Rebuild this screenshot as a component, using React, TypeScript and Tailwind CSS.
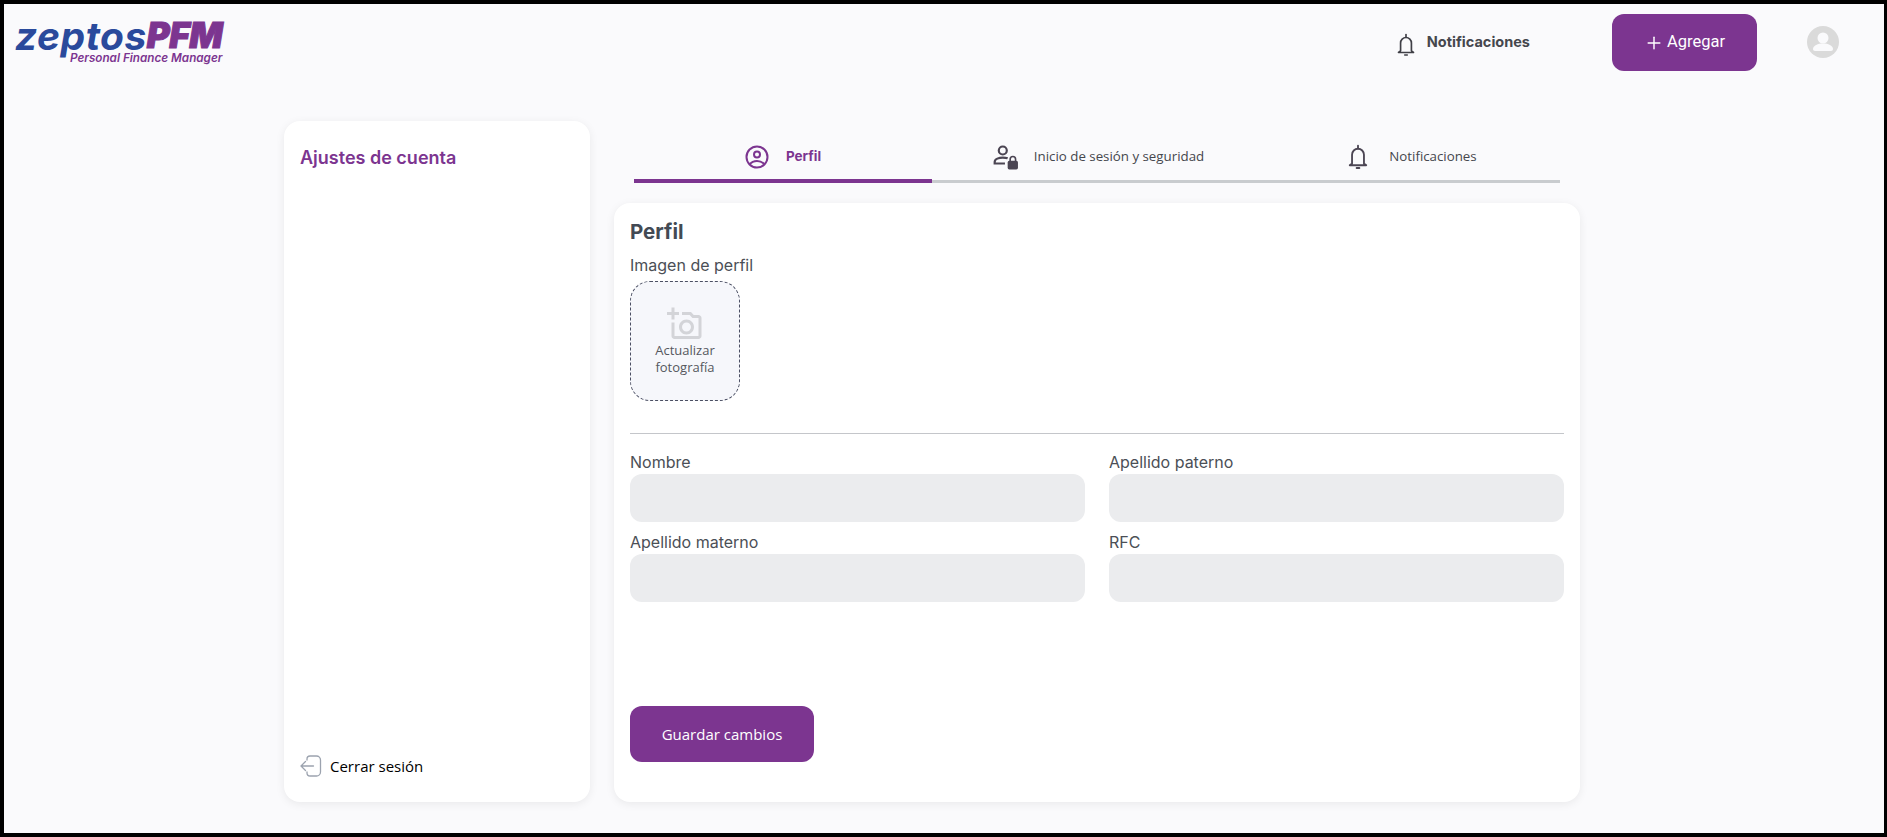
import React from 'react';
import { Plus } from 'lucide-react';
import { MdOutlineAddAPhoto } from 'react-icons/md';

const uiFont = "font-['Open_Sans','Liberation_Sans',sans-serif]";
const headFont = "font-['Inter','Liberation_Sans',sans-serif]";

const BellIcon: React.FC<{ className?: string }> = ({ className }) => (
  <svg viewBox="0 0 24 28" fill="none" stroke="currentColor" strokeWidth="2" className={className}>
    <path d="M12 1.5v3" strokeLinecap="round" />
    <path d="M5.5 21v-9.5a6.5 6.5 0 0 1 13 0V21l2.5 2H3z" strokeLinejoin="round" />
    <path d="M10.5 26h3" strokeLinecap="round" />
  </svg>
);

const ProfileIcon: React.FC<{ className?: string }> = ({ className }) => (
  <svg viewBox="0 0 24 24" fill="none" stroke="currentColor" strokeWidth="2" className={className}>
    <circle cx="12" cy="12" r="10.5" />
    <circle cx="12" cy="9.5" r="3" />
    <path d="M4.5 19.5c2-2.6 4.6-3.6 7.5-3.6s5.500 1 7.500 3.600" />
  </svg>
);

const UserLockIcon: React.FC<{ className?: string }> = ({ className }) => (
  <svg viewBox="0 0 24 24" fill="none" className={className}>
    <circle cx="9.500" cy="6" r="3.700" stroke="currentColor" strokeWidth="2" />
    <path d="M14 13.200c-1.300-.5-2.800-.7-4.500-.7-3.500 0-7.500 1.300-7.500 4v1.500h9.500" stroke="currentColor" strokeWidth="2" />
    <rect x="14" y="15.500" width="9.500" height="8" rx="1.500" fill="currentColor" />
    <path d="M16.300 16v-2a2.500 2.500 0 0 1 5 0v2" stroke="currentColor" strokeWidth="1.500" />
  </svg>
);

const LogoutIcon: React.FC<{ className?: string }> = ({ className }) => (
  <svg viewBox="0 0 22 22" fill="none" stroke="currentColor" strokeWidth="1.300" strokeLinecap="round" strokeLinejoin="round" className={className}>
    <path d="M7 5V4a3 3 0 0 1 3-3h6.500a4 4 0 0 1 4 4v12a4 4 0 0 1-4 4H10a3 3 0 0 1-3-3v-1" />
    <path d="M13.500 11H1.500M5.500 6.500 1 11l4.500 4.500" />
  </svg>
);

const AvatarIcon: React.FC<{ className?: string }> = ({ className }) => (
  <svg viewBox="0 0 32 32" className={className}>
    <circle cx="16" cy="16" r="16" fill="#DADADA" />
    <circle cx="16" cy="12" r="5.500" fill="#FAFAFC" />
    <path d="M6 23c0-3.500 5-5.500 10-5.500s10 2 10 5.500c0 1.200-.8 2-2 2H8c-1.200 0-2-.8-2-2z" fill="#FAFAFC" />
  </svg>
);

const Logo = () => (
  <div className="flex flex-col">
    <div className="flex h-[33px] items-center">
      <span className="font-['Inter',sans-serif] text-[39px] leading-none font-bold tracking-[0.5px] text-[#2A4A9C] italic">
        zeptos
      </span>
      <span className="font-['Inter',sans-serif] text-[35px] leading-none font-black tracking-[-0.5px] text-[#7C3590] italic [-webkit-text-stroke:1px_#7C3590]">
        PFM
      </span>
    </div>
    <span className="ml-[55px] font-['Inter',sans-serif] text-[11.700px] leading-[13px] font-semibold text-[#7C3590] italic">
      Personal Finance Manager
    </span>
  </div>
);

const Field: React.FC<{ label: string }> = ({ label }) => (
  <div className="flex flex-col">
    <label className={`${headFont} h-[20px] text-[16px] leading-[20px] text-[#4B4F56]`}>{label}</label>
    <div className="mt-[2px] h-[48px] rounded-[12px] bg-[#EBECEE]" />
  </div>
);

const App = () => {
  return (
    <div className="box-border flex h-[837px] w-full flex-col border-t-4 border-r-[3px] border-b-4 border-l-4 border-black bg-[#FAFAFC]">
      <header className="flex h-[117px] shrink-0 items-start">
        <div className="ml-[11px] mt-[15px]">
          <Logo />
        </div>
        <div className="mt-[23px] ml-auto flex items-center gap-[11px]">
          <BellIcon className="mt-[6px] h-[24px] w-[20px] text-[#3F3F46]" />
          <span className={`${headFont} text-[14.500px] font-bold text-[#45474D]`}>Notificaciones</span>
        </div>
        <button
          type="button"
          className="mt-[10px] ml-[82px] flex h-[57px] w-[145px] items-center justify-center gap-[3px] rounded-[12px] bg-[#7C3590] text-[16.500px] text-white"
        >
          <Plus className="h-[20px] w-[20px]" strokeWidth={1.75} />
          <span className="font-['Roboto',sans-serif]">Agregar</span>
        </button>
        <div className="mt-[22px] ml-[50px] mr-[45px]">
          <AvatarIcon className="h-[32px] w-[32px]" />
        </div>
      </header>

      <main className="flex min-h-0 flex-1 items-stretch gap-[24px] pr-[304px] pb-[31px] pl-[280px]">
        <aside className="flex w-[306px] shrink-0 flex-col justify-between rounded-[16px] bg-white pt-[23px] pr-4 pb-[25px] pl-[16px] shadow-[0_2px_10px_rgba(0,0,0,0.07)]">
          <h2 className={`${headFont} text-[18px] font-semibold text-[#7C3590]`}>Ajustes de cuenta</h2>
          <div className="flex items-center gap-[8px]">
            <LogoutIcon className="h-[22px] w-[22px] text-[#9CA3AF]" />
            <span className={`${uiFont} text-[15px] text-black`}>Cerrar sesión</span>
          </div>
        </aside>

        <section className="flex min-w-0 flex-1 flex-col">
          <nav className="mx-[20px] flex h-[62px] shrink-0 items-stretch">
            <div className="flex w-[298px] items-center justify-center gap-[17px] border-b-4 border-[#7C3590] pt-[13px] text-[#7C3590]">
              <ProfileIcon className="h-[24px] w-[24px]" />
              <span className={`${headFont} text-[13.500px] font-bold`}>Perfil</span>
            </div>
            <div className="flex w-[332px] items-center justify-center gap-[15px] border-b-[3px] border-[#C9CCCF] pt-[13px] text-[#4B4553]">
              <UserLockIcon className="h-[26px] w-[27px]" />
              <span className={`${uiFont} text-[13.300px] text-[#45474D]`}>Inicio de sesión y seguridad</span>
            </div>
            <div className="flex w-[296px] items-center justify-center gap-[20px] border-b-[3px] border-[#C9CCCF] pt-[13px] text-[#4B4553]">
              <BellIcon className="h-[26px] w-[22px]" />
              <span className={`${uiFont} text-[13.300px] text-[#45474D]`}>Notificaciones</span>
            </div>
          </nav>

          <div className="mt-[20px] flex min-h-0 flex-1 flex-col rounded-[16px] bg-white px-[16px] shadow-[0_2px_10px_rgba(0,0,0,0.07)]">
            <h1 className={`${headFont} mt-[15px] text-[20.500px] leading-[28px] font-bold text-[#434A54]`}>Perfil</h1>
            <p className={`${headFont} mt-[9px] text-[16px] leading-[20px] text-[#4B4F56]`}>Imagen de perfil</p>
            <div className="mt-[6px] flex h-[120px] w-[110px] flex-col items-center justify-center rounded-[20px] border border-dashed border-[#4B4F63] bg-[#F6F7FB] pb-[1px]">
              <MdOutlineAddAPhoto className="h-[36px] w-[36px] text-[#D3D4D8]" />
              <span className={`${uiFont} text-center text-[13px] leading-[16.500px] text-[#55585E]`}>
                Actualizar
                <br />
                fotografía
              </span>
            </div>
            <hr className="mt-[32px] border-t border-[#C4C6CA]" />
            <div className="mt-[18px] grid grid-cols-2 gap-x-[24px] gap-y-[10px]">
              <Field label="Nombre" />
              <Field label="Apellido paterno" />
              <Field label="Apellido materno" />
              <Field label="RFC" />
            </div>
            <button
              type="button"
              className={`${uiFont} mt-[104px] h-[56px] w-[184px] rounded-[12px] bg-[#7C3590] text-[15px] text-white`}
            >
              Guardar cambios
            </button>
          </div>
        </section>
      </main>
    </div>
  );
};

export default App;
